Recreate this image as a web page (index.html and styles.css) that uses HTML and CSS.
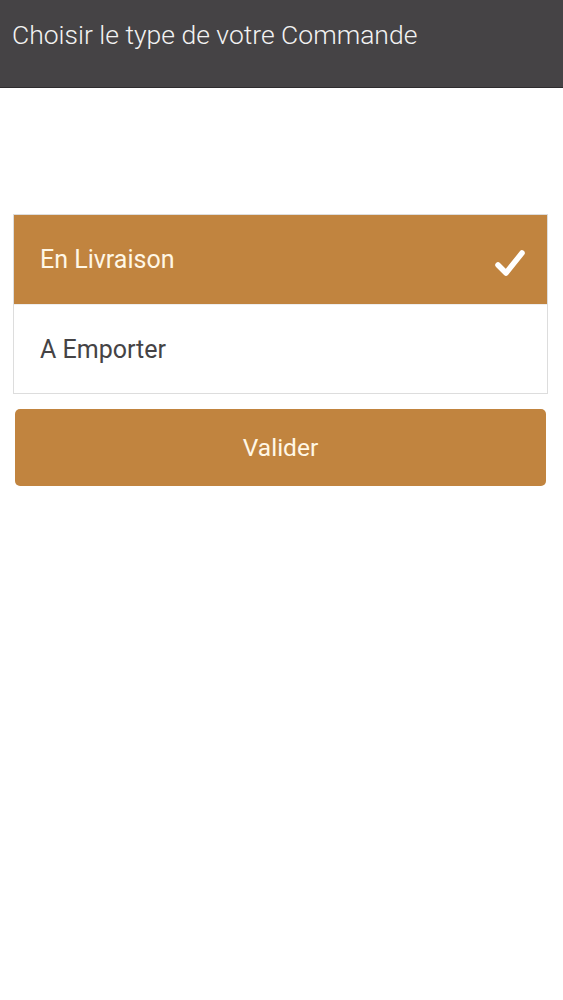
FILE: index.html
```html
<!DOCTYPE html>
<html lang="fr">
<head>
<meta charset="utf-8">
<title>Choisir le type de votre Commande</title>
<link rel="stylesheet" href="styles.css">
</head>
<body>
<header class="topbar">
  <h1 class="topbar-title">Choisir le type de votre Commande</h1>
</header>
<main class="content">
  <ul class="choices">
    <li class="choice choice-selected">
      <span class="choice-label">En Livraison</span>
      <svg class="check" viewBox="0 0 30 28" width="30" height="28" aria-hidden="true">
        <path d="M3 16 L11 24 L27 4" fill="none" stroke="#ffffff" stroke-width="5.5" stroke-linecap="round" stroke-linejoin="round"/>
      </svg>
    </li>
    <li class="choice">
      <span class="choice-label">A Emporter</span>
    </li>
  </ul>
  <button class="submit" type="button">Valider</button>
</main>
</body>
</html>
```
FILE: styles.css
```css
* { box-sizing: border-box; }
html, body { margin: 0; padding: 0; background: #ffffff; }
body { font-family: Roboto, "Noto Sans", sans-serif; }

.topbar {
  height: 88px;
  background: #454345;
  border-bottom: 1px solid #2e2c2e;
  padding: 0 12px;
}
.topbar-title {
  margin: 0;
  padding-top: 18px;
  font-weight: 300;
  font-size: 26.5px;
  line-height: 34px;
  color: #f2f2f2;
}

.content {
  padding: 126px 16px 0 13px;
}

.choices {
  list-style: none;
  margin: 0;
  padding: 0;
  border: 1px solid #dddddd;
  width: 535px;
}
.choice {
  height: 89px;
  display: flex;
  align-items: center;
  justify-content: space-between;
  padding: 0 22px 0 26px;
  font-size: 25px;
  color: #454345;
}
.choice + .choice { border-top: 1px solid #eeeeee; }
.choice-selected {
  background: #c1843f;
  color: #fff7e6;
}
.choice-label { display: block; }
.check { display: block; margin-top: 6px; }

.submit {
  display: block;
  margin: 15px 0 0 2px;
  width: 531px;
  height: 77px;
  border: none;
  border-radius: 5px;
  background: #c1843f;
  color: #fff7e6;
  font-family: Roboto, "Noto Sans", sans-serif;
  font-size: 24.5px;
  cursor: pointer;
}
```
